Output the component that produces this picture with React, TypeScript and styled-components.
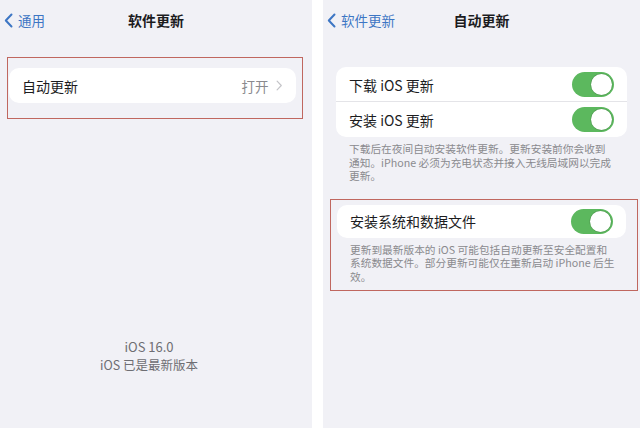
import styled, { createGlobalStyle } from 'styled-components';

const GlobalStyle = createGlobalStyle`
	html, body {
		margin: 0;
		padding: 0;
		background: #ffffff;
	}
	body {
		font-family: "Noto Sans CJK SC", "Liberation Sans", sans-serif;
		color: #1c1c1e;
	}
`;

const Chevron = ({ color, size, right }: { color: string; size: number; right?: boolean }) => (
	<svg width={size * 0.6} height={size} viewBox='0 0 9 15'>
		<path
			d={right ? 'M1.5 1.5 L7.2 7.5 L1.5 13.5' : 'M7.5 1.5 L1.8 7.5 L7.5 13.5'}
			fill='none'
			stroke={color}
			strokeWidth={right ? 1.6 : 2}
			strokeLinecap='round'
			strokeLinejoin='round'
		/>
	</svg>
);

const Toggle = () => (
	<Switch>
		<Knob />
	</Switch>
);

const App = () => {
	return (
		<>
			<GlobalStyle />
			<Screen>
				<Panel width='312px'>
					<NavBar>
						<BackLink>
							<Chevron color='#3d76c4' size={15} />
							<span>通用</span>
						</BackLink>
						<Title>软件更新</Title>
					</NavBar>
					<Highlight margin='17px 9px 0 7px' padding='10px 6px 15px 1px'>
						<Card>
							<Row height='35px'>
								<RowLabel>自动更新</RowLabel>
								<RowValue>
									打开
									<Chevron color='#c4c4c8' size={11} right />
								</RowValue>
							</Row>
						</Card>
					</Highlight>
					<VersionInfo>
						<VersionLine size='13px'>iOS 16.0</VersionLine>
						<VersionLine size='12.5px'>iOS 已是最新版本</VersionLine>
					</VersionInfo>
				</Panel>
				<Panel width='317px'>
					<NavBar>
						<BackLink>
							<Chevron color='#3d76c4' size={15} />
							<span>软件更新</span>
						</BackLink>
						<Title>自动更新</Title>
					</NavBar>
					<Group>
						<Card>
							<Row height='35px' divider>
								<RowLabel>下载 iOS 更新</RowLabel>
								<Toggle />
							</Row>
							<Row height='35px'>
								<RowLabel>安装 iOS 更新</RowLabel>
								<Toggle />
							</Row>
						</Card>
						<Footnote>
							下载后在夜间自动安装软件更新。更新安装前你会收到
							<br />
							通知。iPhone 必须为充电状态并接入无线局域网以完成
							<br />
							更新。
						</Footnote>
					</Group>
					<Highlight margin='16px 2px 0 7px' padding='5px 11px 7px 6px'>
						<Card>
							<Row height='33px'>
								<RowLabel>安装系统和数据文件</RowLabel>
								<Toggle />
							</Row>
						</Card>
						<Footnote>
							更新到最新版本的 iOS 可能包括自动更新至安全配置和
							<br />
							系统数据文件。部分更新可能仅在重新启动 iPhone 后生
							<br />
							效。
						</Footnote>
					</Highlight>
				</Panel>
			</Screen>
		</>
	);
};

export default App;

// Styled Components
const Screen = styled.div`
	display: flex;
	gap: 11px;
	width: 640px;
	height: 428px;
	overflow: hidden;
	background: #ffffff;
`;

const Panel = styled.div<{ width: string }>`
	display: flex;
	flex-direction: column;
	width: ${(props) => props.width};
	flex-shrink: 0;
	height: 100%;
	background: #f1f1f6;
`;

const NavBar = styled.div`
	position: relative;
	display: flex;
	align-items: center;
	justify-content: center;
	height: 40px;
`;

const BackLink = styled.div`
	position: absolute;
	left: 4px;
	top: 0;
	height: 100%;
	display: flex;
	align-items: center;
	gap: 5px;
	font-size: 13.5px;
	color: #3d76c4;
`;

const Title = styled.div`
	font-size: 14px;
	font-weight: 700;
	color: #1c1c1e;
`;

const Highlight = styled.div<{ margin: string; padding: string }>`
	margin: ${(props) => props.margin};
	padding: ${(props) => props.padding};
	border: 1.5px solid #c0675f;
	display: flex;
	flex-direction: column;
`;

const Group = styled.div`
	display: flex;
	flex-direction: column;
	margin: 27px 13px 0 13px;
`;

const Card = styled.div`
	background: #ffffff;
	border-radius: 10px;
	overflow: hidden;
	display: flex;
	flex-direction: column;
`;

const Row = styled.div<{ height: string; divider?: boolean }>`
	display: flex;
	align-items: center;
	justify-content: space-between;
	height: ${(props) => props.height};
	padding: 0 13px 0 13px;
	box-shadow: ${(props) => (props.divider ? 'inset 0 -1px 0 #e4e4e8' : 'none')};
`;

const RowLabel = styled.span`
	font-size: 14px;
	color: #1c1c1e;
	white-space: nowrap;
`;

const RowValue = styled.span`
	display: flex;
	align-items: center;
	gap: 8px;
	font-size: 13.5px;
	color: #8a8a8e;
`;

const Switch = styled.div`
	width: 42px;
	height: 25px;
	border-radius: 13px;
	background: #5cb85e;
	display: flex;
	align-items: center;
	justify-content: flex-end;
	padding: 0 2px;
	box-sizing: border-box;
`;

const Knob = styled.div`
	width: 21px;
	height: 21px;
	border-radius: 50%;
	background: #ffffff;
	box-shadow: 0 0 0 0.5px rgba(60, 120, 60, 0.5);
`;

const Footnote = styled.div`
	padding: 5px 0 0 13px;
	font-size: 10.7px;
	line-height: 13.5px;
	color: #8a8a8e;
	white-space: nowrap;
`;

const VersionInfo = styled.div`
	display: flex;
	flex-direction: column;
	align-items: center;
	margin-top: 219px;
	margin-right: 14px;
	color: #6e6e73;
`;

const VersionLine = styled.div<{ size: string }>`
	font-size: ${(props) => props.size};
	line-height: 18px;
`;
